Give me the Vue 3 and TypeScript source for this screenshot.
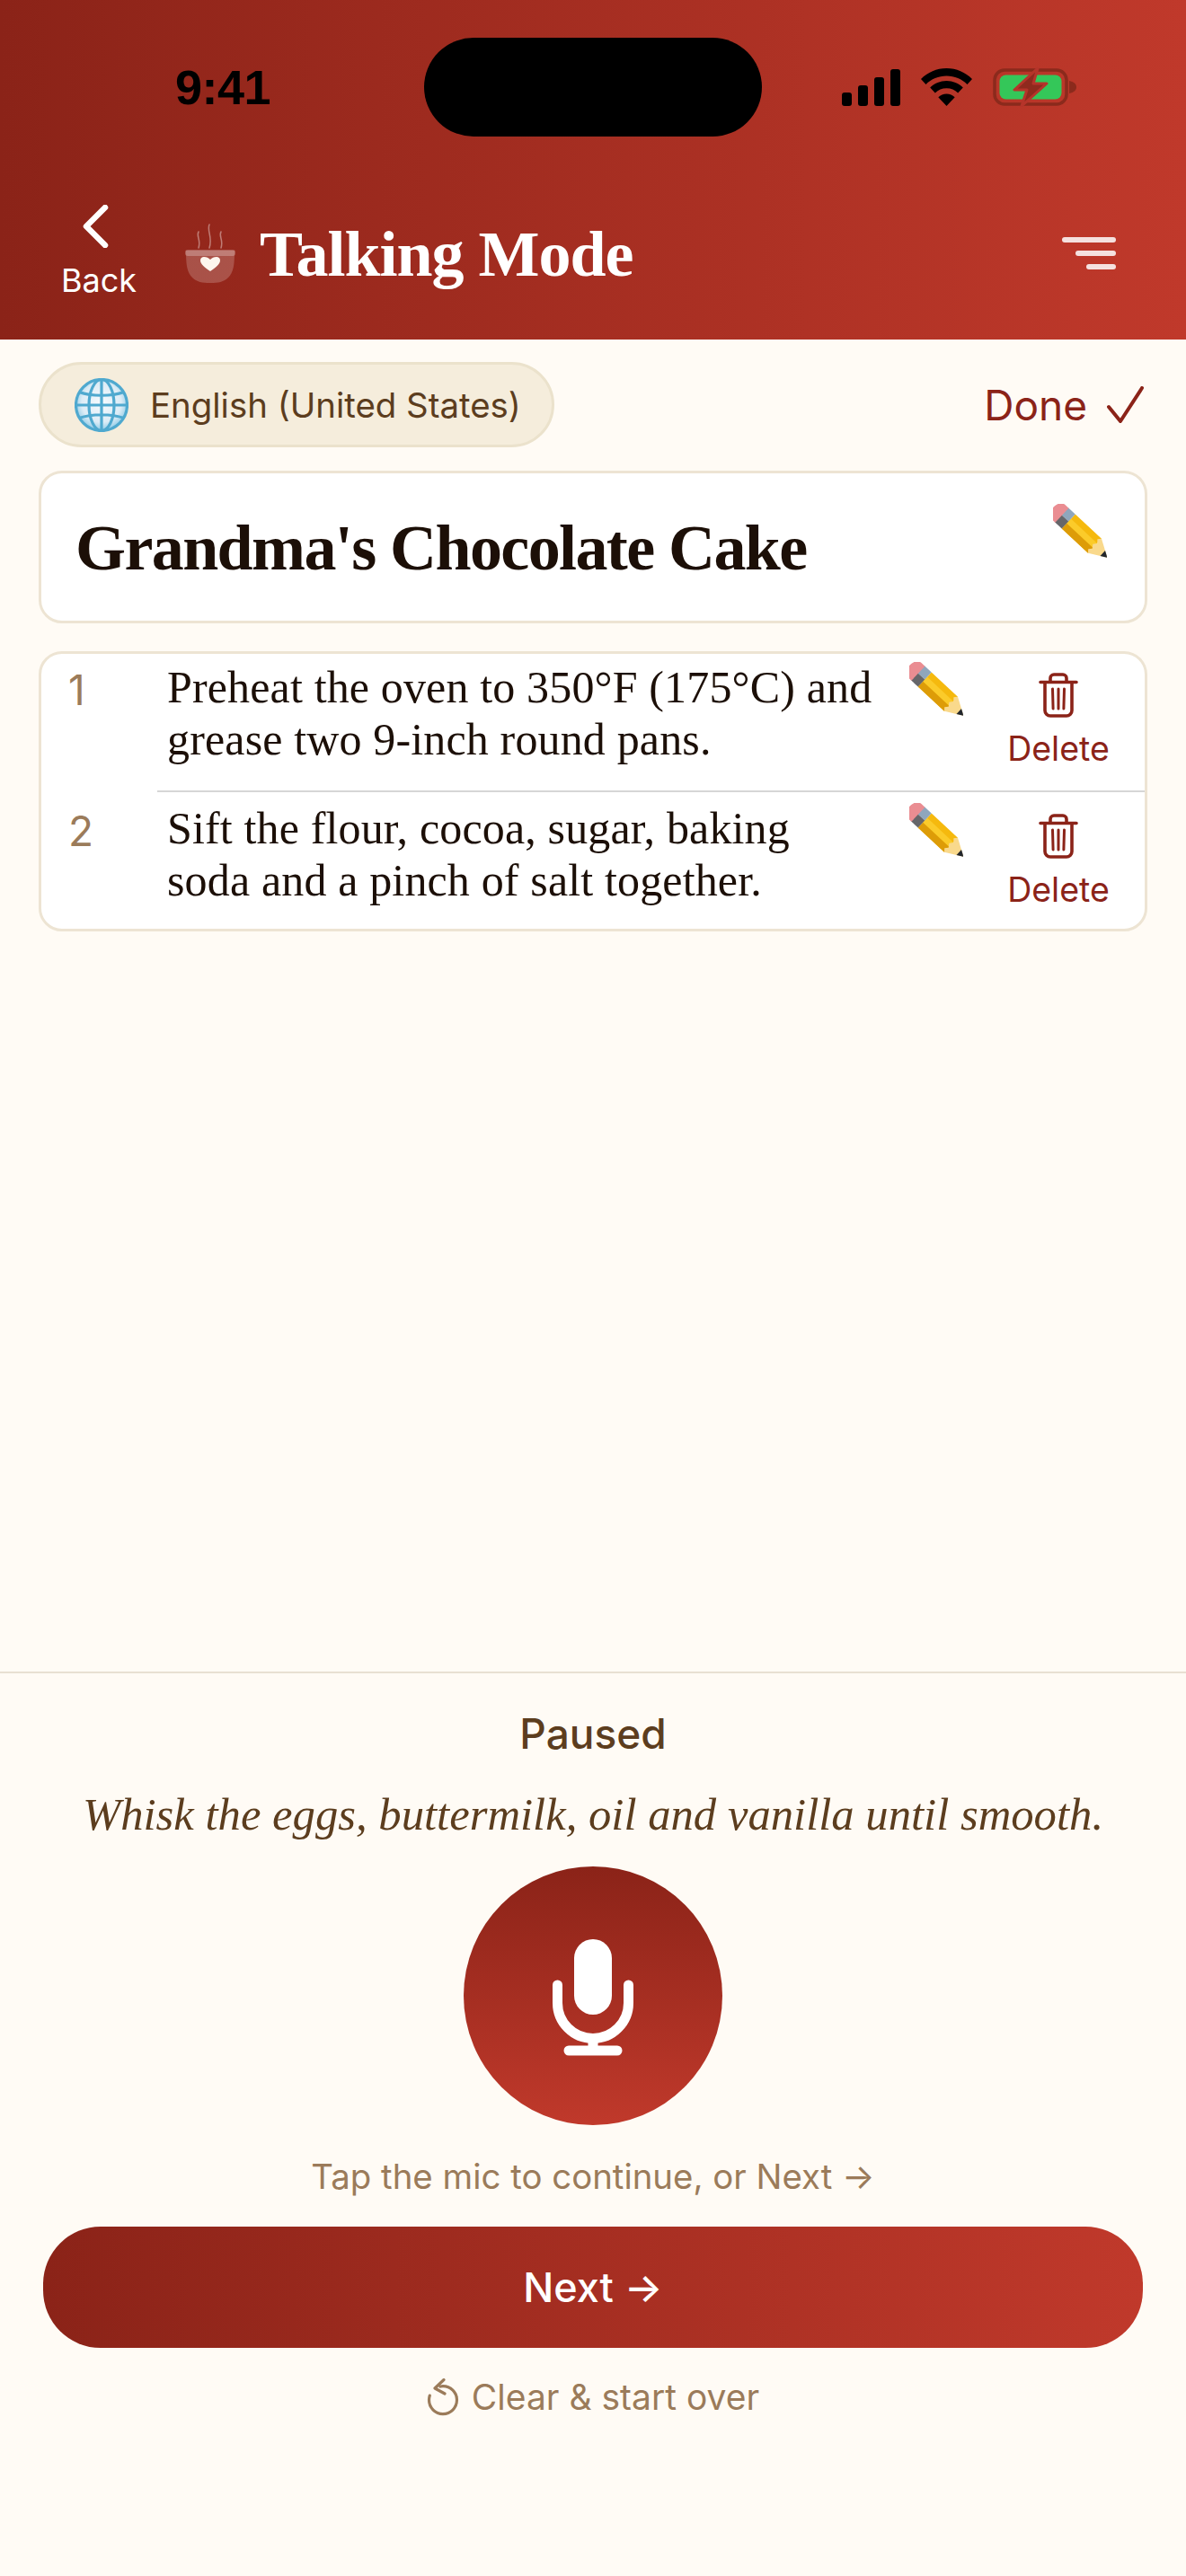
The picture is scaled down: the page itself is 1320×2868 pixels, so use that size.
<script setup lang="ts">
interface Step {
  n: number;
  lines: string[];
}

const steps: Step[] = [
  { n: 1, lines: ['Preheat the oven to 350°F (175°C) and', 'grease two 9-inch round pans.'] },
  { n: 2, lines: ['Sift the flour, cocoa, sugar, baking', 'soda and a pinch of salt together.'] }
];
</script>

<template>
  <div class="page">
    <header class="header">
      <div class="status">
        <span class="time">9:41</span>
        <div class="island"></div>
        <div class="status-icons">
          <svg width="65" height="41" viewBox="0 0 65 41" fill="#000">
            <rect x="0" y="26" width="11" height="15" rx="3" />
            <rect x="18" y="18" width="11" height="23" rx="3" />
            <rect x="36" y="9" width="11" height="32" rx="3" />
            <rect x="54" y="0" width="11" height="41" rx="3" />
          </svg>
          <svg width="57" height="42" viewBox="0 0 57 42" fill="#000">
            <path d="M28.5 0C39.5 0 49.500 4.500 57 12l-5.500 6C45.500 12 37.500 8.500 28.500 8.500S11.500 12 5.500 18L0 12C7.500 4.500 17.500 0 28.500 0z" />
            <path d="M28.500 14c7 0 13.500 2.800 18.300 7.500l-5.600 6C37.800 24.200 33.400 22.300 28.500 22.300s-9.300 1.900-12.700 5.200l-5.600-6C15 16.800 21.500 14 28.500 14z" />
            <path d="M28.500 28.500c3.600 0 6.800 1.400 9.200 3.700L28.500 42l-9.200-9.800c2.400-2.300 5.600-3.700 9.200-3.700z" />
          </svg>
          <svg width="93" height="44" viewBox="0 0 93 44">
            <rect x="2" y="3" width="80" height="38" rx="11" fill="none" stroke="#8b2a1c" stroke-width="3.500" />
            <rect x="7.500" y="8.500" width="69" height="27" rx="7" fill="#34c759" />
            <path d="M85 15c5 1 8 3.500 8 7s-3 6-8 7z" fill="#8b2a1c" />
            <path d="M50 1 24 25h14l-6 18 28-25H45z" fill="#8f2a1e" stroke="#b5342a" stroke-width="3" stroke-linejoin="round" />
          </svg>
        </div>
      </div>
      <nav class="nav">
        <button class="back" type="button">
          <svg width="30" height="48" viewBox="0 0 30 48" fill="none" stroke="#fff" stroke-width="6.500" stroke-linecap="round" stroke-linejoin="round">
            <path d="M26 3 5 24l21 21" />
          </svg>
          <span>Back</span>
        </button>
        <svg class="cup" width="56" height="66" viewBox="0 0 56 66">
          <g fill="none" stroke="#fff" stroke-opacity=".4" stroke-width="1.500" stroke-linecap="round">
            <path d="M15 9c-3 5 3 9 0 18" />
            <path d="M27 1c-3 7 4 14 0 26" />
            <path d="M40 9c-3 5 3 9 0 18" />
          </g>
          <path d="M1 30h54c0 16-1 24-7 30-5 5-11 6-20 6s-15-1-20-6C2 54 1 46 1 30z" fill="#fff" fill-opacity=".2" />
          <rect y="29" width="56" height="7" rx="3" fill="#fff" fill-opacity=".25" />
          <path d="M28 53c-6-4-11-8-11-12 0-3 2-4 4-4 3 0 5 1 7 3 2-2 4-3 7-3 2 0 4 1 4 4 0 4-5 8-11 12z" fill="#fdf6ee" />
        </svg>
        <h1 class="nav-title">Talking Mode</h1>
        <div class="menu"><i></i><i></i><i></i></div>
      </nav>
    </header>

    <main class="main">
      <div class="toolbar">
        <div class="pill">
          <svg width="60" height="60" viewBox="0 0 60 60">
            <defs>
              <radialGradient id="globeFill" cx="50%" cy="45%" r="55%">
                <stop offset="0" stop-color="#f7fbfe" />
                <stop offset=".7" stop-color="#dcecf6" />
                <stop offset="1" stop-color="#8fcbe6" />
              </radialGradient>
            </defs>
            <circle cx="30" cy="30" r="28.500" fill="url(#globeFill)" />
            <g fill="none" stroke="#4fa9cf" stroke-width="3.200">
              <circle cx="30" cy="30" r="28.500" />
              <ellipse cx="30" cy="30" rx="14" ry="28.500" />
              <path d="M30 1.500v57M1.500 30h57M5 15.500c14 5 36 5 50 0M5 44.500c14-5 36-5 50 0" />
            </g>
          </svg>
          <span>English (United States)</span>
        </div>
        <button class="done" type="button">
          <span>Done</span>
          <svg width="42" height="42" viewBox="0 0 42 42" fill="none" stroke="#8b2318" stroke-width="4" stroke-linecap="round" stroke-linejoin="round">
            <path d="M2 23 15 39 39 2" />
          </svg>
        </button>
      </div>

      <section class="title-card">
        <h2>Grandma's Chocolate Cake</h2>
        <svg class="pencil" width="60" height="60" viewBox="0 0 60 60">
          <use href="#pencilGlyph" />
        </svg>
      </section>

      <section class="steps">
        <svg width="0" height="0" class="defs">
          <defs>
            <g id="pencilGlyph" transform="translate(7 10) rotate(43)">
              <rect x="14" y="-11" width="40" height="22" fill="#f5b90e" />
              <rect x="14" y="-4" width="40" height="7" fill="#fbcb2a" />
              <rect x="14" y="3" width="40" height="8" fill="#dd9c08" />
              <path d="M54-11 73 0 54 11l-3-3.500 3-3.500-3-4 3-4-3-3.500z" fill="#f9d98c" />
              <path d="M66-4 73 0 66 4z" fill="#22262c" />
              <rect x="3" y="-11" width="11" height="11" fill="#8fa6bc" />
              <rect x="3" y="0" width="11" height="11" fill="#66666a" />
              <path d="M4-11H-1c-5 0-8 4-8 11s3 11 8 11H4z" fill="#ea8d92" />
            </g>
          </defs>
        </svg>
        <div v-for="step in steps" :key="step.n" class="step">
          <span class="num">{{ step.n }}</span>
          <div class="step-body">
            <p class="step-text">
              <span v-for="line in step.lines" :key="line">{{ line }}</span>
            </p>
            <svg class="pencil" width="60" height="60" viewBox="0 0 60 60">
              <use href="#pencilGlyph" />
            </svg>
            <button class="delete" type="button">
              <svg width="44" height="50" viewBox="0 0 44 50" fill="none" stroke="#8b2318" stroke-width="3.600" stroke-linecap="round" stroke-linejoin="round">
                <path d="M2 10.500h40M13 10V6a4 4 0 0 1 4-4h10a4 4 0 0 1 4 4v4" />
                <path d="M7 11v31a6 6 0 0 0 6 6h18a6 6 0 0 0 6-6V11" />
                <path d="M15.500 18l.6 22M22 18v22M28.500 18l-.6 22" stroke-width="3" />
              </svg>
              <span>Delete</span>
            </button>
          </div>
        </div>
      </section>
    </main>

    <footer class="panel">
      <div class="paused">Paused</div>
      <p class="sentence">Whisk the eggs, buttermilk, oil and vanilla until smooth.</p>
      <button class="mic" type="button" aria-label="Microphone">
        <svg width="90" height="130" viewBox="0 0 90 130" fill="none" stroke="#fff" stroke-linecap="round">
          <rect x="24" y="0" width="42" height="84" rx="21" fill="#fff" stroke="none" />
          <path d="M5.500 51v20a39.500 39.500 0 0 0 79 0V51" stroke-width="11" />
          <path d="M45 110v14" stroke-width="11" stroke-linecap="butt" />
          <path d="M18 124h54" stroke-width="11" />
        </svg>
      </button>
      <p class="hint">Tap the mic to continue, or Next →</p>
      <button class="next" type="button">Next →</button>
      <button class="clear" type="button">
        <svg width="36" height="42" viewBox="0 0 36 42" fill="none" stroke="#9b7b5a" stroke-width="3.200" stroke-linecap="round" stroke-linejoin="round">
          <path d="M15 9c1-.3 2-.4 3-.4a15.500 15.500 0 1 1-15.500 15.500c0-1.800.3-3.400.8-5" />
          <path d="M19 1.500 9 11l11 6" />
        </svg>
        <span>Clear &amp; start over</span>
      </button>
    </footer>
  </div>
</template>

<style>
html,
body {
  background: #fffbf5;
}
</style>

<style scoped>
.page {
  width: 1320px;
  height: 2868px;
  display: flex;
  flex-direction: column;
  background: #fffbf5;
  font-family: Inter, "Noto Sans", sans-serif;
}

button {
  padding: 0;
  border: 0;
  background: none;
  font: inherit;
  cursor: pointer;
}

.header {
  height: 378px;
  flex: none;
  background: linear-gradient(90deg, #8b2318, #c0392b);
}

.status {
  height: 110px;
  padding: 42px 122px 0 195px;
  display: flex;
  align-items: center;
}

.time {
  width: 277px;
  color: #000;
  font-size: 54px;
  font-weight: 600;
  letter-spacing: -0.5px;
  font-family: "Liberation Sans", sans-serif;
}

.island {
  width: 376px;
  height: 110px;
  border-radius: 55px;
  background: #000;
}

.status-icons {
  margin-left: auto;
  display: flex;
  align-items: center;
  gap: 23px;
}

.nav {
  height: 130px;
  margin-top: 64px;
  padding: 0 78px 0 68px;
  display: flex;
  align-items: center;
}

.back {
  width: 84px;
  display: flex;
  flex-direction: column;
  align-items: center;
  gap: 14px;
  color: #fff;
  font-size: 36px;
  line-height: 44px;
}

.back svg {
  margin-left: -8px;
}

.cup {
  margin-left: 54px;
  margin-top: 2px;
}

.nav-title {
  margin: 4px 0 0 27px;
  flex: 1;
  color: #fff;
  font-family: "Liberation Serif", serif;
  font-size: 72px;
  font-weight: 700;
  letter-spacing: -1px;
  line-height: 80px;
}

.menu {
  width: 60px;
  display: flex;
  flex-direction: column;
  align-items: flex-end;
  gap: 9px;
  margin-top: 2px;
}

.menu i {
  display: block;
  height: 6px;
  border-radius: 3px;
  background: rgba(255, 255, 255, 0.85);
}

.menu i:nth-child(1) { width: 60px; }
.menu i:nth-child(2) { width: 45px; }
.menu i:nth-child(3) { width: 33px; }

.main {
  flex: 1;
  padding: 25px 43px 0;
}

.toolbar {
  display: flex;
  align-items: center;
  justify-content: space-between;
}

.pill {
  height: 95px;
  box-sizing: border-box;
  padding: 0 34px 0 37px;
  display: flex;
  align-items: center;
  gap: 24px;
  border: 3px solid #ebe2cc;
  border-radius: 48px;
  background: #f5eddc;
  color: #5c3d1e;
  font-size: 38.4px;
}

.done {
  display: flex;
  align-items: center;
  gap: 22px;
  padding-right: 3px;
  color: #8b2318;
  font-size: 46px;
}

.title-card {
  height: 170px;
  margin-top: 26px;
  box-sizing: border-box;
  padding: 0 42px 0 38px;
  display: flex;
  align-items: center;
  justify-content: space-between;
  border: 3px solid #ede4d3;
  border-radius: 26px;
  background: #fff;
}

.title-card h2 {
  margin: 2px 0 0;
  color: #1c0f07;
  font-family: "Liberation Serif", serif;
  font-size: 72px;
  font-weight: 700;
  letter-spacing: -1.6px;
  line-height: 80px;
}

.title-card .pencil {
  margin: -36px 0 0;
}

.steps {
  margin-top: 31px;
  box-sizing: border-box;
  border: 3px solid #ede4d3;
  border-radius: 26px;
  background: #fff;
  overflow: hidden;
}

.defs {
  position: absolute;
}

.step {
  height: 152px;
  padding-left: 30px;
  display: flex;
}

.step + .step {
  height: 154px;
}

.num {
  width: 99px;
  padding-top: 15px;
  color: #9b7b5a;
  font-size: 46px;
  line-height: 50px;
}

.step + .step .num {
  padding-top: 20px;
}

.step-body {
  flex: 1;
  min-width: 0;
  padding-left: 11px;
  display: flex;
  align-items: flex-start;
}

.step + .step .step-body {
  padding-top: 3px;
  border-top: 2px solid #d6d6d6;
}

.step-text {
  width: 826px;
  margin: 8px 0 0;
  color: #1c0f07;
  font-family: "Liberation Serif", serif;
  font-size: 50px;
  letter-spacing: 0.15px;
  line-height: 58px;
  white-space: nowrap;
}

.step-text span {
  display: block;
}

.step .pencil {
  margin-top: 9px;
  flex: none;
}

.delete {
  width: 114px;
  margin: 21px 0 0 49px;
  display: flex;
  flex-direction: column;
  align-items: center;
  gap: 12px;
  color: #8b2318;
  font-size: 37.5px;
  line-height: 46px;
}

.panel {
  height: 1007px;
  flex: none;
  box-sizing: border-box;
  padding-top: 42px;
  display: flex;
  flex-direction: column;
  align-items: center;
  border-top: 2px solid #e8e0d2;
}

.paused {
  color: #5c3d1e;
  font-size: 46px;
  font-weight: 500;
  line-height: 50px;
}

.sentence {
  margin: 37px 0 0;
  color: #5c3d1e;
  font-family: "Liberation Serif", serif;
  font-size: 50.7px;
  font-style: italic;
  line-height: 56px;
  white-space: nowrap;
}

.mic {
  width: 288px;
  height: 288px;
  flex: none;
  margin-top: 30px;
  display: flex;
  align-items: center;
  justify-content: center;
  border-radius: 50%;
  background: linear-gradient(180deg, #8b2318, #c0392b);
}

.mic svg {
  margin-top: 3px;
}

.hint {
  margin: 34px 0 0;
  color: #9b7b5a;
  font-size: 38.4px;
  line-height: 46px;
}

.next {
  width: 1224px;
  height: 135px;
  flex: none;
  margin-top: 33px;
  border-radius: 64px;
  background: linear-gradient(90deg, #8b2318, #c0392b);
  color: #fff;
  font-size: 45px;
  font-weight: 500;
}

.clear {
  margin-top: 32px;
  display: flex;
  align-items: center;
  gap: 14px;
  color: #9b7b5a;
  font-size: 39px;
  line-height: 46px;
}
</style>
